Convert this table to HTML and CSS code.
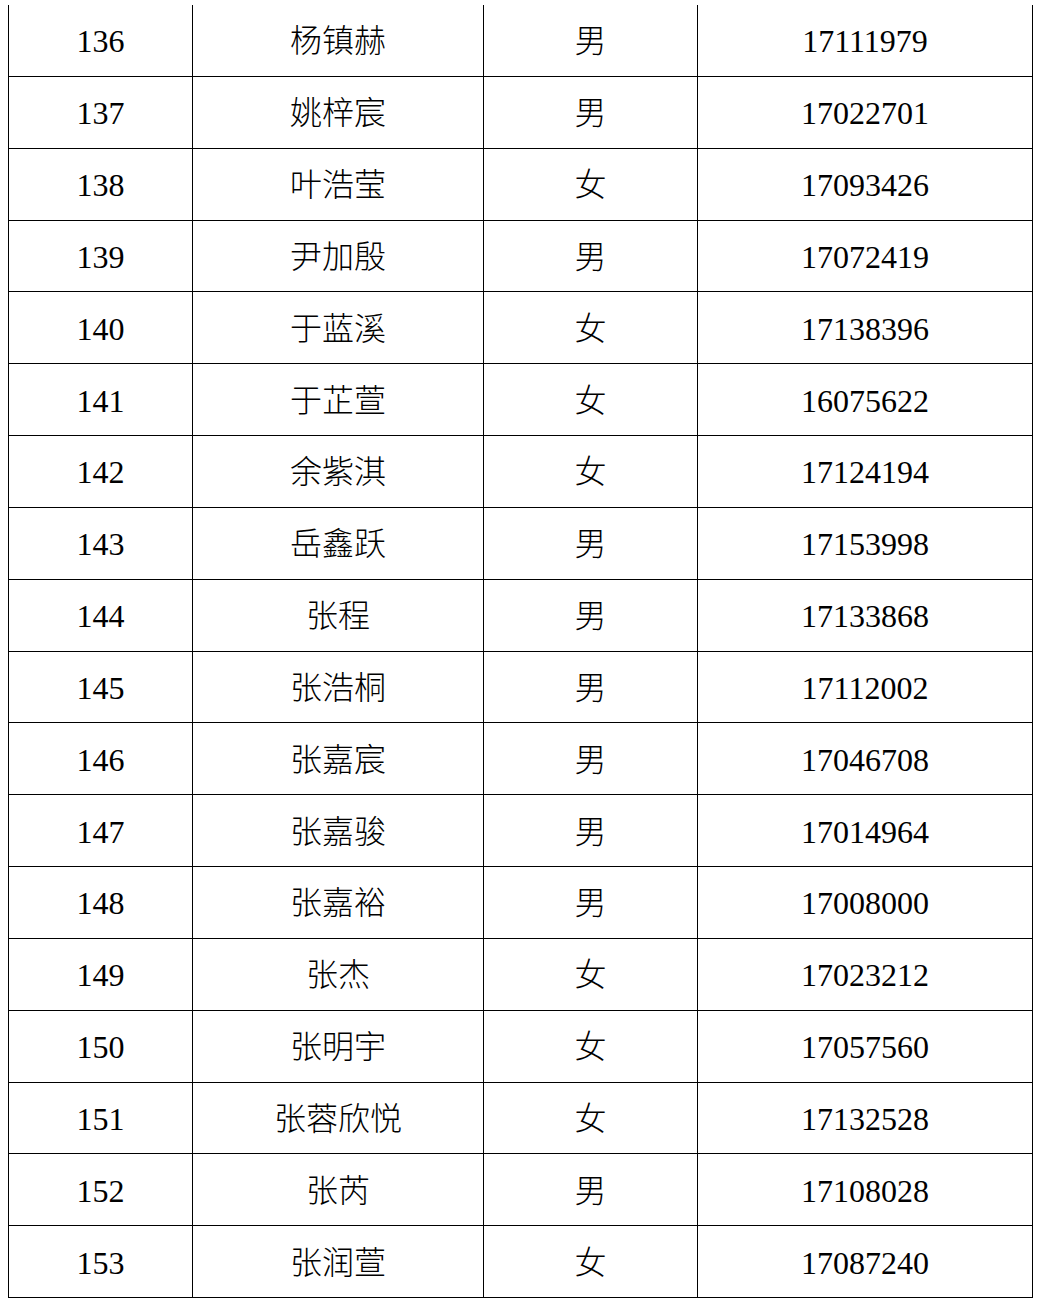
FILE: index.html
```html
<!DOCTYPE html>
<html lang="zh-CN">
<head>
<meta charset="utf-8">
<title>名单</title>
<link rel="stylesheet" href="styles.css">
</head>
<body>
<div class="sheet">
  <div class="cell">136</div><div class="cell">杨镇赫</div><div class="cell">男</div><div class="cell">17111979</div>
  <div class="cell">137</div><div class="cell">姚梓宸</div><div class="cell">男</div><div class="cell">17022701</div>
  <div class="cell">138</div><div class="cell">叶浩莹</div><div class="cell">女</div><div class="cell">17093426</div>
  <div class="cell">139</div><div class="cell">尹加殷</div><div class="cell">男</div><div class="cell">17072419</div>
  <div class="cell">140</div><div class="cell">于蓝溪</div><div class="cell">女</div><div class="cell">17138396</div>
  <div class="cell">141</div><div class="cell">于芷萱</div><div class="cell">女</div><div class="cell">16075622</div>
  <div class="cell">142</div><div class="cell">余紫淇</div><div class="cell">女</div><div class="cell">17124194</div>
  <div class="cell">143</div><div class="cell">岳鑫跃</div><div class="cell">男</div><div class="cell">17153998</div>
  <div class="cell">144</div><div class="cell">张程</div><div class="cell">男</div><div class="cell">17133868</div>
  <div class="cell">145</div><div class="cell">张浩桐</div><div class="cell">男</div><div class="cell">17112002</div>
  <div class="cell">146</div><div class="cell">张嘉宸</div><div class="cell">男</div><div class="cell">17046708</div>
  <div class="cell">147</div><div class="cell">张嘉骏</div><div class="cell">男</div><div class="cell">17014964</div>
  <div class="cell">148</div><div class="cell">张嘉裕</div><div class="cell">男</div><div class="cell">17008000</div>
  <div class="cell">149</div><div class="cell">张杰</div><div class="cell">女</div><div class="cell">17023212</div>
  <div class="cell">150</div><div class="cell">张明宇</div><div class="cell">女</div><div class="cell">17057560</div>
  <div class="cell">151</div><div class="cell">张蓉欣悦</div><div class="cell">女</div><div class="cell">17132528</div>
  <div class="cell">152</div><div class="cell">张芮</div><div class="cell">男</div><div class="cell">17108028</div>
  <div class="cell">153</div><div class="cell">张润萱</div><div class="cell">女</div><div class="cell">17087240</div>
</div>
</body>
</html>
```

FILE: styles.css
```css
html, body {
  margin: 0;
  padding: 0;
  background: #ffffff;
}

body {
  padding: 5px 0 0 8px;
  font-family: "Liberation Serif", "Noto Sans CJK SC", serif;
  font-weight: 300;
  font-size: 32px;
  color: #000000;
}

.sheet {
  display: grid;
  grid-template-columns: 184px 291px 214px 335px;
  grid-template-rows: repeat(18, 1fr);
  height: 1293px;
  width: 1025px;
  box-sizing: border-box;
  border-left: 1px solid #000000;
}

.cell {
  box-sizing: border-box;
  border-right: 1px solid #000000;
  border-bottom: 1px solid #000000;
  display: flex;
  align-items: center;
  justify-content: center;
  padding-top: 2px;
  line-height: 1;
}
```
